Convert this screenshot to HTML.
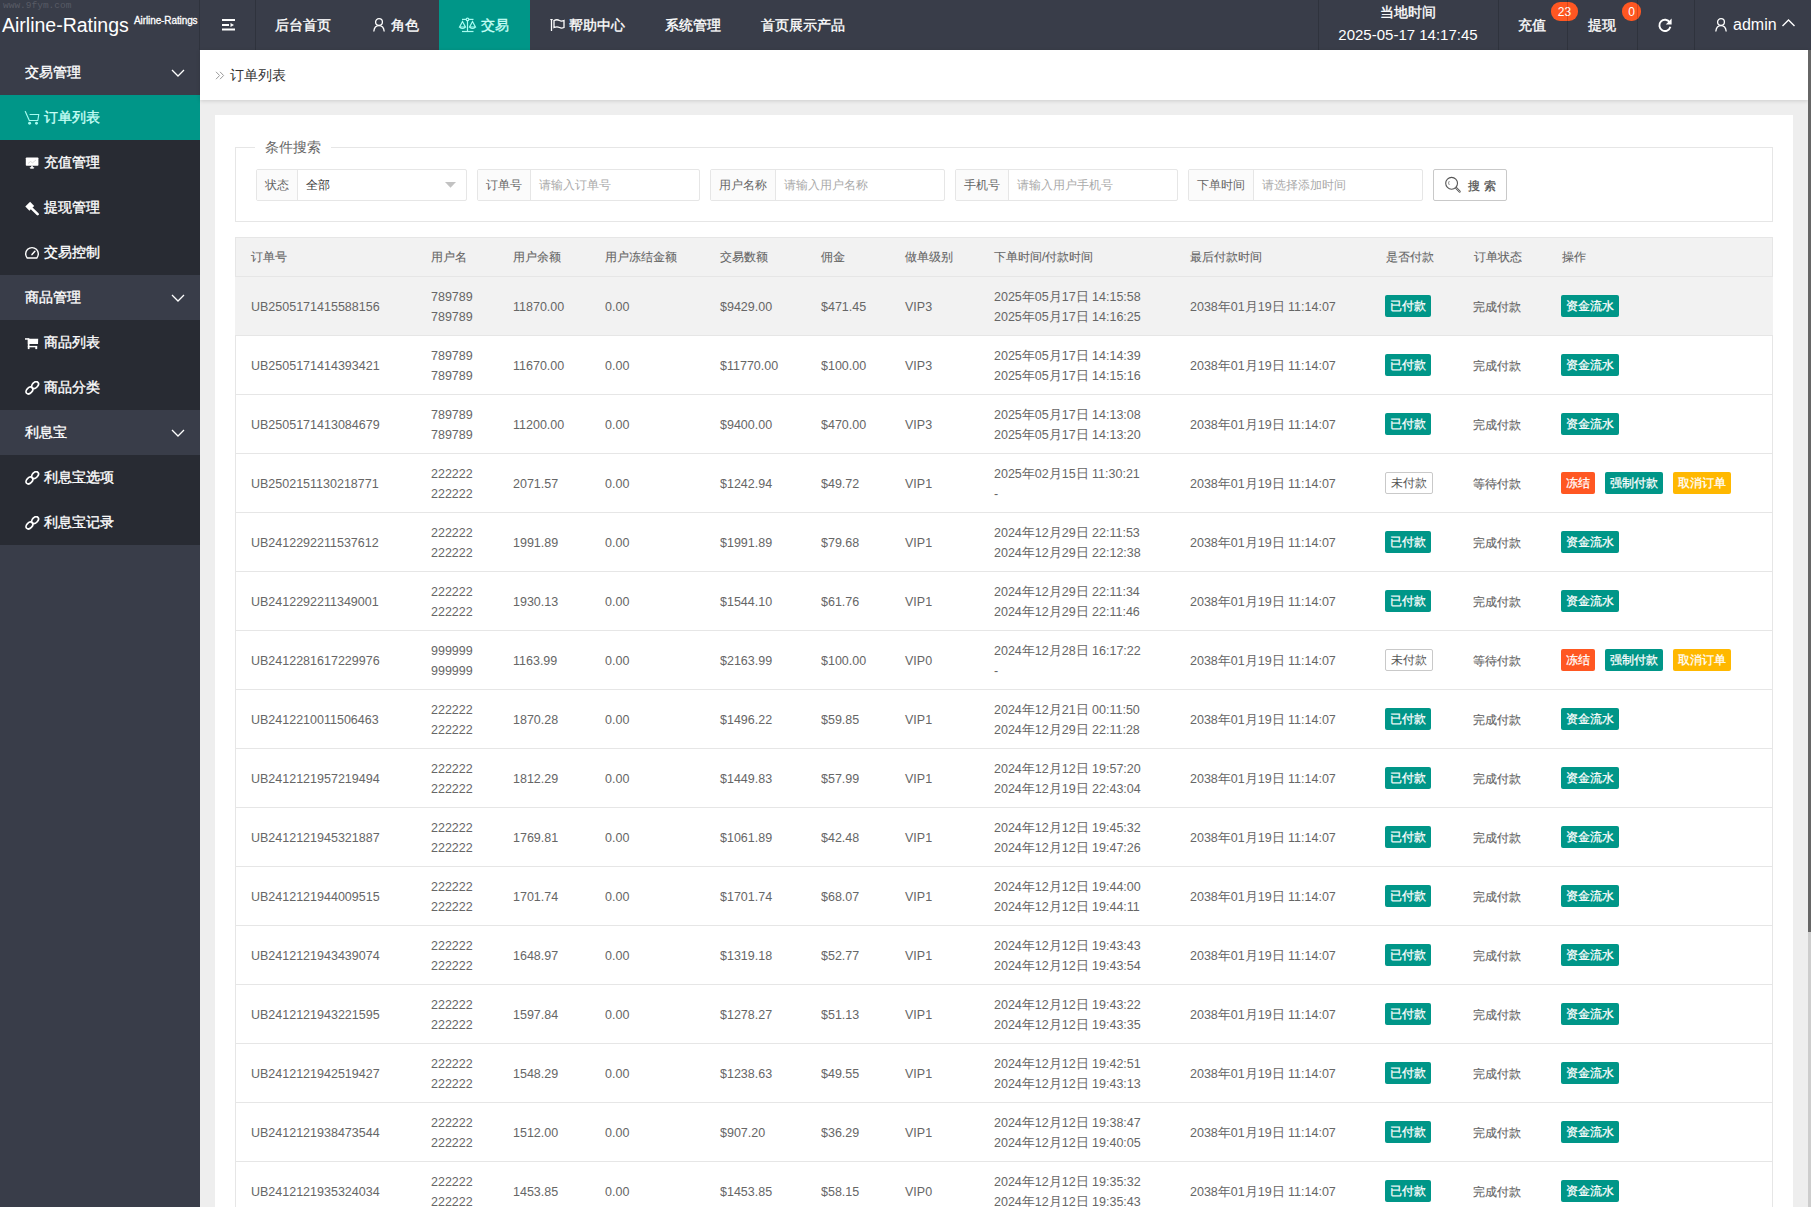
<!DOCTYPE html>
<html><head><meta charset="utf-8"><title>订单列表</title>
<style>
*{margin:0;padding:0;box-sizing:border-box}
html,body{width:1811px;height:1207px;overflow:hidden;background:#eeeeee;font-family:"Liberation Sans",sans-serif;color:#666}
.abs{position:absolute}
/* header */
.hdr{position:absolute;left:0;top:0;width:1811px;height:50px;background:#393D49;color:#fff}
.wm{position:absolute;left:3px;top:0px;font-family:"Liberation Mono",monospace;font-size:9.5px;color:#585b65;letter-spacing:0px}
.logo{position:absolute;left:2px;top:14px;font-size:19.5px;color:#fff;white-space:nowrap}
.logo2{position:absolute;left:134px;top:15px;font-size:10px;color:#fff;white-space:nowrap;letter-spacing:-0.1px}
.sep{position:absolute;top:0;width:1px;height:50px;background:rgba(0,0,0,.16)}
.nav{position:absolute;top:0;height:50px;line-height:50px;font-size:14px;color:#fff;white-space:nowrap}
.nav.act{background:#009688;color:#e6fffc}
.nav svg{position:absolute}
.badge{position:absolute;height:18.5px;line-height:20px;border-radius:9px;background:#FF5722;color:#fff;font-size:12px;text-align:center}
/* side */
.side{position:absolute;left:0;top:50px;width:200px;height:1157px;background:#393D49}
.grp{position:absolute;left:0;width:200px;height:45px;line-height:45px;font-size:14px;color:#fff;padding-left:25px}
.kids{position:absolute;left:0;width:200px;background:#282B33}
.item{position:absolute;left:0;width:200px;height:45px;line-height:45px;font-size:14px;color:#fff;padding-left:44px}
.item.act{background:#009688;color:#e6fffc}
.item svg,.grp svg{position:absolute}
/* body */
.crumb{position:absolute;left:200px;top:50px;width:1608px;height:50px;background:#fff;box-shadow:0 1px 4px rgba(0,0,0,.14)}
.crumb .t{position:absolute;left:30px;top:0;line-height:50px;font-size:14px;color:#333}
.crumb .r{position:absolute;left:15px;top:0;line-height:49px;font-size:14px;color:#999}
.card{position:absolute;left:215px;top:115px;width:1578px;height:1200px;background:#fff}
.fs{position:absolute;left:235px;top:147px;width:1538px;height:75px;border:1px solid #e6e6e6}
.legend{position:absolute;left:255px;top:137px;padding:0 10px;background:#fff;font-size:14px;line-height:20px;color:#666}
.ig{position:absolute;top:169px;height:32px;border:1px solid #e6e6e6;border-radius:2px;background:#fff}
.ig .lb{position:absolute;left:0;top:0;height:30px;line-height:30px;background:#fbfbfb;border-right:1px solid #e6e6e6;font-size:12px;color:#666;text-align:center}
.ig .ph{position:absolute;top:0;height:30px;line-height:30px;font-size:12px;color:#aaa;white-space:nowrap}
.sbtn{position:absolute;left:1433px;top:169px;width:74px;height:32px;border:1px solid #c9c9c9;border-radius:2px;background:#fff;font-size:12.5px;line-height:30px;color:#555}
/* table */
.tbl{position:absolute;left:235px;top:237px;width:1538px;height:1000px;border:1px solid #e6e6e6;border-bottom:none;background:#fff}
.thead{position:absolute;left:-1px;top:-1px;width:1538px;height:40px;background:#f2f2f2;border:1px solid #e6e6e6}
.tr{position:absolute;left:-1px;width:1538px;height:60px;border-top:1px solid #e6e6e6;border-bottom:1px solid #e6e6e6}
.tr.hov{background:#f2f2f2}
.td{position:absolute;top:0;height:100%;padding-left:16px;padding-top:2px;display:flex;align-items:center;font-size:12.5px;color:#666;white-space:nowrap}
.thead .td{color:#666;font-size:12px;padding-top:1px;padding-left:15px}
.l2{line-height:20px}
.btn{display:inline-block;height:22px;line-height:22px;padding:0 5px;font-size:12px;color:#fff;border-radius:2px;white-space:nowrap}
.tb{background:#009688}
.rb{background:#FF5722}
.yb{background:#FFB800}
.ml{margin-left:10px}
.unpaid{display:inline-block;height:22px;line-height:20px;padding:0 5px;font-size:12px;color:#555;border:1px solid #c9c9c9;border-radius:2px;background:#fff}
.sb{position:absolute;left:1808px;top:50px;width:3px;height:1157px;background:#cdcdcd}
.sb i{position:absolute;left:0;top:0;width:3px;height:882px;background:#666}
.nav,.grp,.item,.cnw{-webkit-text-stroke:0.35px currentColor}
.lat{-webkit-text-stroke:0}
.wm,.logo{-webkit-text-stroke:0}
.logo2{-webkit-text-stroke:0.3px #fff}
.cn{font-size:12px}
.td .btn,.td .unpaid{position:relative;top:-1px}
.btn{-webkit-text-stroke:0.25px currentColor}
.td > .btn:first-child,.td > .unpaid,.td > .cn{margin-left:-1px}
.sbtn span{-webkit-text-stroke:0.25px #555}
.thead{-webkit-text-stroke:0.1px currentColor}
.cn{-webkit-text-stroke:0.15px currentColor}

</style></head>
<body>
<div class="hdr">
  <div class="wm">www.9fym.com</div>
  <div class="logo">Airline-Ratings</div>
  <div class="logo2">Airline-Ratings</div>
  <div class="sep" style="left:199px"></div>
  <div class="sep" style="left:255px"></div>
  <svg class="abs" style="left:222px;top:19px" width="13" height="12" viewBox="0 0 13 12"><rect x="0" y="0" width="13" height="2" fill="#fff"/><rect x="0" y="5" width="7" height="2" fill="#fff"/><polygon points="8.5,4 12,6 8.5,8" fill="#fff"/><rect x="0" y="9.5" width="13" height="2" fill="#fff"/></svg>
  <div class="nav" style="left:275px">后台首页</div>
  <svg class="abs" style="left:372px;top:17px" width="14" height="16" viewBox="0 0 14 16"><circle cx="7" cy="5" r="3.4" fill="none" stroke="#fff" stroke-width="1.3"/><path d="M1.8 14.5 C2.2 10.5 4.5 8.7 7 8.7 C9.5 8.7 11.8 10.5 12.2 14.5" fill="none" stroke="#fff" stroke-width="1.3"/></svg>
  <div class="nav" style="left:391px">角色</div>
  <div class="nav act" style="left:439px;width:91px"></div>
  <svg class="abs" style="left:458px;top:17px" width="20" height="16" viewBox="0 0 20 16"><g fill="none" stroke="#a6fbf0" stroke-width="1.2"><path d="M4 2.4 H15.5"/><circle cx="9.5" cy="2.4" r="1.3" fill="#009688"/><path d="M9.5 3.7 V14.5"/><path d="M4 14.5 H15.5"/><path d="M4.5 4.5 L1.6 10 H7.4 Z"/><path d="M1.6 10 Q4.5 13 7.4 10"/><path d="M14.5 4.5 L11.6 10 H17.4 Z"/><path d="M11.6 10 Q14.5 13 17.4 10"/></g></svg>
  <div class="nav" style="left:481px;color:#c8fff6">交易</div>
  <svg class="abs" style="left:549px;top:18px" width="17" height="14" viewBox="0 0 17 14"><g fill="none" stroke="#fff" stroke-width="1.3"><path d="M2.5 1 V13"/><path d="M5 2.5 Q8 1 10.5 2.5 Q12.5 3.6 15 2.5 V9.5 Q12.5 10.6 10.5 9.5 Q8 8.2 5 9.5 Z"/></g><path d="M1 1 L4 1 L2.5 3 Z" fill="#fff"/></svg>
  <div class="nav" style="left:569px">帮助中心</div>
  <div class="nav" style="left:665px">系统管理</div>
  <div class="nav" style="left:761px">首页展示产品</div>

  <div class="sep" style="left:1318px"></div>
  <div class="abs cnw" style="left:1318px;top:3px;width:180px;text-align:center;font-size:14px;line-height:18px;color:#fff">当地时间</div>
  <div class="abs" style="left:1318px;top:26px;width:180px;text-align:center;font-size:15px;line-height:18px;color:#fff">2025-05-17 14:17:45</div>
  <div class="sep" style="left:1498px"></div>
  <div class="nav" style="left:1518px">充值</div>
  <div class="badge" style="left:1551px;top:2px;width:27px">23</div>
  <div class="sep" style="left:1567px;z-index:2"></div>
  <div class="nav" style="left:1588px">提现</div>
  <div class="badge" style="left:1622px;top:2px;width:19px">0</div>
  <div class="sep" style="left:1637px;z-index:2"></div>
  <svg class="abs" style="left:1657px;top:17px" width="16" height="16" viewBox="0 0 16 16"><path d="M12.8 5.5 A5.6 5.6 0 1 0 13.4 9.8" fill="none" stroke="#fff" stroke-width="1.9"/><polygon points="14.6,1.6 14.6,7.4 8.8,7.4" fill="#fff"/></svg>
  <div class="sep" style="left:1694px"></div>
  <svg class="abs" style="left:1714px;top:17px" width="14" height="16" viewBox="0 0 14 16"><circle cx="7" cy="5" r="3.4" fill="none" stroke="#fff" stroke-width="1.3"/><path d="M1.8 14.5 C2.2 10.5 4.5 8.7 7 8.7 C9.5 8.7 11.8 10.5 12.2 14.5" fill="none" stroke="#fff" stroke-width="1.3"/></svg>
  <div class="nav lat" style="left:1733px;font-size:16px">admin</div>
  <svg class="abs" style="left:1781px;top:18px" width="15" height="10" viewBox="0 0 15 10"><path d="M1.5 8 L7.5 2 L13.5 8" fill="none" stroke="#fff" stroke-width="1.4"/></svg>
</div>

<div class="side">
  <div class="grp" style="top:0">交易管理<svg style="left:171px;top:19px" width="14" height="8" viewBox="0 0 14 8"><path d="M1 1 L7 7 L13 1" fill="none" stroke="#fff" stroke-width="1.3"/></svg></div>
  <div class="kids" style="top:45px;height:180px">
    <div class="item act" style="top:0">
      <svg style="left:24px;top:16px" width="16" height="14" viewBox="0 0 16 14"><path d="M1.3 0.6 L5.3 9.5 H13.8 L14.8 3.5 H6" fill="none" stroke="#a6fbf0" stroke-width="1.15" stroke-linejoin="round" stroke-linecap="round"/><circle cx="5.6" cy="12.2" r="1.45" fill="#a6fbf0"/><circle cx="12.5" cy="12.2" r="1.45" fill="#a6fbf0"/></svg>
      <span style="color:#c8fff6">订单列表</span></div>
    <div class="item" style="top:45px">
      <svg style="left:25px;top:17px" width="14" height="12" viewBox="0 0 14 12"><rect x="0.8" y="0.5" width="12.6" height="8.3" rx="0.8" fill="#fff"/><path d="M3 6.5 L5.5 4.5 L7.5 5.8 L11 3" stroke="#c8c8c8" stroke-width="0.7" fill="none"/><rect x="6.2" y="8.8" width="1.6" height="1.6" fill="#fff"/><ellipse cx="7" cy="10.8" rx="2.4" ry="0.9" fill="#fff"/></svg>
      充值管理</div>
    <div class="item" style="top:90px">
      <svg style="left:25px;top:16px" width="14" height="15" viewBox="0 0 14 15"><polygon points="0.3,5.6 5.1,0.8 9.2,4.9 4.4,9.7" fill="#fff"/><path d="M7.2 7.8 L12.6 13.2" stroke="#fff" stroke-width="2.6" stroke-linecap="round"/></svg>
      提现管理</div>
    <div class="item" style="top:135px">
      <svg style="left:25px;top:16px" width="14" height="13" viewBox="0 0 14 13"><path d="M2.2 12 A6.3 6.3 0 1 1 11.8 12 Z" fill="none" stroke="#fff" stroke-width="1.4" stroke-linejoin="round"/><path d="M7 8.6 L9.9 5.3" stroke="#fff" stroke-width="1.5" stroke-linecap="round"/></svg>
      交易控制</div>
  </div>
  <div class="grp" style="top:225px">商品管理<svg style="left:171px;top:19px" width="14" height="8" viewBox="0 0 14 8"><path d="M1 1 L7 7 L13 1" fill="none" stroke="#fff" stroke-width="1.3"/></svg></div>
  <div class="kids" style="top:270px;height:90px">
    <div class="item" style="top:0">
      <svg style="left:25px;top:18px" width="14" height="12" viewBox="0 0 14 12"><g fill="#fff"><rect x="0" y="0.2" width="3.8" height="1.5"/><rect x="2.8" y="0.5" width="1.7" height="10.6"/><polygon points="2.8,0.8 13.2,0.8 13.0,5.9 2.8,5.9"/><rect x="2.8" y="7.9" width="9.4" height="1.4"/><rect x="10.3" y="8.5" width="1.9" height="2.6"/></g></svg>
      商品列表</div>
    <div class="item" style="top:45px">
      <svg style="left:25px;top:16px" width="15" height="15" viewBox="0 0 15 15"><g fill="none" stroke="#fff" stroke-width="1.7"><ellipse cx="4.4" cy="9.5" rx="3.9" ry="2.7" transform="rotate(-45 4.4 9.5)"/><ellipse cx="10.1" cy="4.1" rx="3.9" ry="2.7" transform="rotate(-45 10.1 4.1)"/></g></svg>
      商品分类</div>
  </div>
  <div class="grp" style="top:360px">利息宝<svg style="left:171px;top:19px" width="14" height="8" viewBox="0 0 14 8"><path d="M1 1 L7 7 L13 1" fill="none" stroke="#fff" stroke-width="1.3"/></svg></div>
  <div class="kids" style="top:405px;height:90px">
    <div class="item" style="top:0">
      <svg style="left:25px;top:16px" width="15" height="15" viewBox="0 0 15 15"><g fill="none" stroke="#fff" stroke-width="1.7"><ellipse cx="4.4" cy="9.5" rx="3.9" ry="2.7" transform="rotate(-45 4.4 9.5)"/><ellipse cx="10.1" cy="4.1" rx="3.9" ry="2.7" transform="rotate(-45 10.1 4.1)"/></g></svg>
      利息宝选项</div>
    <div class="item" style="top:45px">
      <svg style="left:25px;top:16px" width="15" height="15" viewBox="0 0 15 15"><g fill="none" stroke="#fff" stroke-width="1.7"><ellipse cx="4.4" cy="9.5" rx="3.9" ry="2.7" transform="rotate(-45 4.4 9.5)"/><ellipse cx="10.1" cy="4.1" rx="3.9" ry="2.7" transform="rotate(-45 10.1 4.1)"/></g></svg>
      利息宝记录</div>
  </div>
</div>

<div class="crumb"><svg class="abs" style="left:15px;top:21px" width="10" height="9" viewBox="0 0 10 9"><path d="M1 0.8 L4.6 4.5 L1 8.2 M5 0.8 L8.6 4.5 L5 8.2" fill="none" stroke="#999" stroke-width="1"/></svg><span class="t">订单列表</span></div>
<div class="card"></div>
<div class="fs"></div>
<div class="legend">条件搜索</div>

<div class="ig" style="left:256px;width:211px"><div class="lb" style="width:41px">状态</div><div class="ph" style="left:49px;color:#333">全部</div><svg class="abs" style="left:188px;top:12px" width="11" height="7" viewBox="0 0 11 7"><polygon points="0,0 11,0 5.5,5.8" fill="#c2c2c2"/></svg></div>
<div class="ig" style="left:477px;width:223px"><div class="lb" style="width:53px">订单号</div><div class="ph" style="left:61px">请输入订单号</div></div>
<div class="ig" style="left:710px;width:235px"><div class="lb" style="width:65px">用户名称</div><div class="ph" style="left:73px">请输入用户名称</div></div>
<div class="ig" style="left:955px;width:223px"><div class="lb" style="width:53px">手机号</div><div class="ph" style="left:61px">请输入用户手机号</div></div>
<div class="ig" style="left:1188px;width:235px"><div class="lb" style="width:65px">下单时间</div><div class="ph" style="left:73px">请选择添加时间</div></div>
<div class="sbtn"><svg class="abs" style="left:10px;top:6px" width="18" height="18" viewBox="0 0 18 18"><circle cx="7.6" cy="7.3" r="5.9" fill="none" stroke="#555" stroke-width="1.1"/><path d="M12.2 12 L15.6 15.6" stroke="#555" stroke-width="2.2" stroke-linecap="round"/><path d="M12.2 12 L15.6 15.6" stroke="#fff" stroke-width="0.6" stroke-linecap="round"/><path d="M5.3 5 A3.2 3.2 0 0 0 5.3 9" fill="none" stroke="#777" stroke-width="0.8"/></svg><span class="abs" style="left:34px;top:1px;letter-spacing:4px;font-size:12px">搜索</span></div>

<div class="tbl"><div class="thead"><div class="td" style="left:0px;width:180px">订单号</div><div class="td" style="left:180px;width:82px">用户名</div><div class="td" style="left:262px;width:92px">用户余额</div><div class="td" style="left:354px;width:115px">用户冻结金额</div><div class="td" style="left:469px;width:101px">交易数额</div><div class="td" style="left:570px;width:84px">佣金</div><div class="td" style="left:654px;width:89px">做单级别</div><div class="td" style="left:743px;width:196px">下单时间/付款时间</div><div class="td" style="left:939px;width:196px">最后付款时间</div><div class="td" style="left:1135px;width:88px">是否付款</div><div class="td" style="left:1223px;width:88px">订单状态</div><div class="td" style="left:1311px;width:226px">操作</div></div><div class="tr hov" style="top:38px"><div class="td" style="left:0px;width:180px">UB2505171415588156</div><div class="td" style="left:180px;width:82px"><div class="l2">789789<br>789789</div></div><div class="td" style="left:262px;width:92px">11870.00</div><div class="td" style="left:354px;width:115px">0.00</div><div class="td" style="left:469px;width:101px">$9429.00</div><div class="td" style="left:570px;width:84px">$471.45</div><div class="td" style="left:654px;width:89px">VIP3</div><div class="td" style="left:743px;width:196px"><div class="l2">2025年05月17日 14:15:58<br>2025年05月17日 14:16:25</div></div><div class="td" style="left:939px;width:196px">2038年01月19日 11:14:07</div><div class="td" style="left:1135px;width:88px"><span class="btn tb pb">已付款</span></div><div class="td" style="left:1223px;width:88px"><span class="cn">完成付款</span></div><div class="td" style="left:1311px;width:226px"><span class="btn tb">资金流水</span></div></div><div class="tr" style="top:97px"><div class="td" style="left:0px;width:180px">UB2505171414393421</div><div class="td" style="left:180px;width:82px"><div class="l2">789789<br>789789</div></div><div class="td" style="left:262px;width:92px">11670.00</div><div class="td" style="left:354px;width:115px">0.00</div><div class="td" style="left:469px;width:101px">$11770.00</div><div class="td" style="left:570px;width:84px">$100.00</div><div class="td" style="left:654px;width:89px">VIP3</div><div class="td" style="left:743px;width:196px"><div class="l2">2025年05月17日 14:14:39<br>2025年05月17日 14:15:16</div></div><div class="td" style="left:939px;width:196px">2038年01月19日 11:14:07</div><div class="td" style="left:1135px;width:88px"><span class="btn tb pb">已付款</span></div><div class="td" style="left:1223px;width:88px"><span class="cn">完成付款</span></div><div class="td" style="left:1311px;width:226px"><span class="btn tb">资金流水</span></div></div><div class="tr" style="top:156px"><div class="td" style="left:0px;width:180px">UB2505171413084679</div><div class="td" style="left:180px;width:82px"><div class="l2">789789<br>789789</div></div><div class="td" style="left:262px;width:92px">11200.00</div><div class="td" style="left:354px;width:115px">0.00</div><div class="td" style="left:469px;width:101px">$9400.00</div><div class="td" style="left:570px;width:84px">$470.00</div><div class="td" style="left:654px;width:89px">VIP3</div><div class="td" style="left:743px;width:196px"><div class="l2">2025年05月17日 14:13:08<br>2025年05月17日 14:13:20</div></div><div class="td" style="left:939px;width:196px">2038年01月19日 11:14:07</div><div class="td" style="left:1135px;width:88px"><span class="btn tb pb">已付款</span></div><div class="td" style="left:1223px;width:88px"><span class="cn">完成付款</span></div><div class="td" style="left:1311px;width:226px"><span class="btn tb">资金流水</span></div></div><div class="tr" style="top:215px"><div class="td" style="left:0px;width:180px">UB2502151130218771</div><div class="td" style="left:180px;width:82px"><div class="l2">222222<br>222222</div></div><div class="td" style="left:262px;width:92px">2071.57</div><div class="td" style="left:354px;width:115px">0.00</div><div class="td" style="left:469px;width:101px">$1242.94</div><div class="td" style="left:570px;width:84px">$49.72</div><div class="td" style="left:654px;width:89px">VIP1</div><div class="td" style="left:743px;width:196px"><div class="l2">2025年02月15日 11:30:21<br>-</div></div><div class="td" style="left:939px;width:196px">2038年01月19日 11:14:07</div><div class="td" style="left:1135px;width:88px"><span class="unpaid">未付款</span></div><div class="td" style="left:1223px;width:88px"><span class="cn">等待付款</span></div><div class="td" style="left:1311px;width:226px"><span class="btn rb">冻结</span><span class="btn tb ml">强制付款</span><span class="btn yb ml">取消订单</span></div></div><div class="tr" style="top:274px"><div class="td" style="left:0px;width:180px">UB2412292211537612</div><div class="td" style="left:180px;width:82px"><div class="l2">222222<br>222222</div></div><div class="td" style="left:262px;width:92px">1991.89</div><div class="td" style="left:354px;width:115px">0.00</div><div class="td" style="left:469px;width:101px">$1991.89</div><div class="td" style="left:570px;width:84px">$79.68</div><div class="td" style="left:654px;width:89px">VIP1</div><div class="td" style="left:743px;width:196px"><div class="l2">2024年12月29日 22:11:53<br>2024年12月29日 22:12:38</div></div><div class="td" style="left:939px;width:196px">2038年01月19日 11:14:07</div><div class="td" style="left:1135px;width:88px"><span class="btn tb pb">已付款</span></div><div class="td" style="left:1223px;width:88px"><span class="cn">完成付款</span></div><div class="td" style="left:1311px;width:226px"><span class="btn tb">资金流水</span></div></div><div class="tr" style="top:333px"><div class="td" style="left:0px;width:180px">UB2412292211349001</div><div class="td" style="left:180px;width:82px"><div class="l2">222222<br>222222</div></div><div class="td" style="left:262px;width:92px">1930.13</div><div class="td" style="left:354px;width:115px">0.00</div><div class="td" style="left:469px;width:101px">$1544.10</div><div class="td" style="left:570px;width:84px">$61.76</div><div class="td" style="left:654px;width:89px">VIP1</div><div class="td" style="left:743px;width:196px"><div class="l2">2024年12月29日 22:11:34<br>2024年12月29日 22:11:46</div></div><div class="td" style="left:939px;width:196px">2038年01月19日 11:14:07</div><div class="td" style="left:1135px;width:88px"><span class="btn tb pb">已付款</span></div><div class="td" style="left:1223px;width:88px"><span class="cn">完成付款</span></div><div class="td" style="left:1311px;width:226px"><span class="btn tb">资金流水</span></div></div><div class="tr" style="top:392px"><div class="td" style="left:0px;width:180px">UB2412281617229976</div><div class="td" style="left:180px;width:82px"><div class="l2">999999<br>999999</div></div><div class="td" style="left:262px;width:92px">1163.99</div><div class="td" style="left:354px;width:115px">0.00</div><div class="td" style="left:469px;width:101px">$2163.99</div><div class="td" style="left:570px;width:84px">$100.00</div><div class="td" style="left:654px;width:89px">VIP0</div><div class="td" style="left:743px;width:196px"><div class="l2">2024年12月28日 16:17:22<br>-</div></div><div class="td" style="left:939px;width:196px">2038年01月19日 11:14:07</div><div class="td" style="left:1135px;width:88px"><span class="unpaid">未付款</span></div><div class="td" style="left:1223px;width:88px"><span class="cn">等待付款</span></div><div class="td" style="left:1311px;width:226px"><span class="btn rb">冻结</span><span class="btn tb ml">强制付款</span><span class="btn yb ml">取消订单</span></div></div><div class="tr" style="top:451px"><div class="td" style="left:0px;width:180px">UB2412210011506463</div><div class="td" style="left:180px;width:82px"><div class="l2">222222<br>222222</div></div><div class="td" style="left:262px;width:92px">1870.28</div><div class="td" style="left:354px;width:115px">0.00</div><div class="td" style="left:469px;width:101px">$1496.22</div><div class="td" style="left:570px;width:84px">$59.85</div><div class="td" style="left:654px;width:89px">VIP1</div><div class="td" style="left:743px;width:196px"><div class="l2">2024年12月21日 00:11:50<br>2024年12月29日 22:11:28</div></div><div class="td" style="left:939px;width:196px">2038年01月19日 11:14:07</div><div class="td" style="left:1135px;width:88px"><span class="btn tb pb">已付款</span></div><div class="td" style="left:1223px;width:88px"><span class="cn">完成付款</span></div><div class="td" style="left:1311px;width:226px"><span class="btn tb">资金流水</span></div></div><div class="tr" style="top:510px"><div class="td" style="left:0px;width:180px">UB2412121957219494</div><div class="td" style="left:180px;width:82px"><div class="l2">222222<br>222222</div></div><div class="td" style="left:262px;width:92px">1812.29</div><div class="td" style="left:354px;width:115px">0.00</div><div class="td" style="left:469px;width:101px">$1449.83</div><div class="td" style="left:570px;width:84px">$57.99</div><div class="td" style="left:654px;width:89px">VIP1</div><div class="td" style="left:743px;width:196px"><div class="l2">2024年12月12日 19:57:20<br>2024年12月19日 22:43:04</div></div><div class="td" style="left:939px;width:196px">2038年01月19日 11:14:07</div><div class="td" style="left:1135px;width:88px"><span class="btn tb pb">已付款</span></div><div class="td" style="left:1223px;width:88px"><span class="cn">完成付款</span></div><div class="td" style="left:1311px;width:226px"><span class="btn tb">资金流水</span></div></div><div class="tr" style="top:569px"><div class="td" style="left:0px;width:180px">UB2412121945321887</div><div class="td" style="left:180px;width:82px"><div class="l2">222222<br>222222</div></div><div class="td" style="left:262px;width:92px">1769.81</div><div class="td" style="left:354px;width:115px">0.00</div><div class="td" style="left:469px;width:101px">$1061.89</div><div class="td" style="left:570px;width:84px">$42.48</div><div class="td" style="left:654px;width:89px">VIP1</div><div class="td" style="left:743px;width:196px"><div class="l2">2024年12月12日 19:45:32<br>2024年12月12日 19:47:26</div></div><div class="td" style="left:939px;width:196px">2038年01月19日 11:14:07</div><div class="td" style="left:1135px;width:88px"><span class="btn tb pb">已付款</span></div><div class="td" style="left:1223px;width:88px"><span class="cn">完成付款</span></div><div class="td" style="left:1311px;width:226px"><span class="btn tb">资金流水</span></div></div><div class="tr" style="top:628px"><div class="td" style="left:0px;width:180px">UB2412121944009515</div><div class="td" style="left:180px;width:82px"><div class="l2">222222<br>222222</div></div><div class="td" style="left:262px;width:92px">1701.74</div><div class="td" style="left:354px;width:115px">0.00</div><div class="td" style="left:469px;width:101px">$1701.74</div><div class="td" style="left:570px;width:84px">$68.07</div><div class="td" style="left:654px;width:89px">VIP1</div><div class="td" style="left:743px;width:196px"><div class="l2">2024年12月12日 19:44:00<br>2024年12月12日 19:44:11</div></div><div class="td" style="left:939px;width:196px">2038年01月19日 11:14:07</div><div class="td" style="left:1135px;width:88px"><span class="btn tb pb">已付款</span></div><div class="td" style="left:1223px;width:88px"><span class="cn">完成付款</span></div><div class="td" style="left:1311px;width:226px"><span class="btn tb">资金流水</span></div></div><div class="tr" style="top:687px"><div class="td" style="left:0px;width:180px">UB2412121943439074</div><div class="td" style="left:180px;width:82px"><div class="l2">222222<br>222222</div></div><div class="td" style="left:262px;width:92px">1648.97</div><div class="td" style="left:354px;width:115px">0.00</div><div class="td" style="left:469px;width:101px">$1319.18</div><div class="td" style="left:570px;width:84px">$52.77</div><div class="td" style="left:654px;width:89px">VIP1</div><div class="td" style="left:743px;width:196px"><div class="l2">2024年12月12日 19:43:43<br>2024年12月12日 19:43:54</div></div><div class="td" style="left:939px;width:196px">2038年01月19日 11:14:07</div><div class="td" style="left:1135px;width:88px"><span class="btn tb pb">已付款</span></div><div class="td" style="left:1223px;width:88px"><span class="cn">完成付款</span></div><div class="td" style="left:1311px;width:226px"><span class="btn tb">资金流水</span></div></div><div class="tr" style="top:746px"><div class="td" style="left:0px;width:180px">UB2412121943221595</div><div class="td" style="left:180px;width:82px"><div class="l2">222222<br>222222</div></div><div class="td" style="left:262px;width:92px">1597.84</div><div class="td" style="left:354px;width:115px">0.00</div><div class="td" style="left:469px;width:101px">$1278.27</div><div class="td" style="left:570px;width:84px">$51.13</div><div class="td" style="left:654px;width:89px">VIP1</div><div class="td" style="left:743px;width:196px"><div class="l2">2024年12月12日 19:43:22<br>2024年12月12日 19:43:35</div></div><div class="td" style="left:939px;width:196px">2038年01月19日 11:14:07</div><div class="td" style="left:1135px;width:88px"><span class="btn tb pb">已付款</span></div><div class="td" style="left:1223px;width:88px"><span class="cn">完成付款</span></div><div class="td" style="left:1311px;width:226px"><span class="btn tb">资金流水</span></div></div><div class="tr" style="top:805px"><div class="td" style="left:0px;width:180px">UB2412121942519427</div><div class="td" style="left:180px;width:82px"><div class="l2">222222<br>222222</div></div><div class="td" style="left:262px;width:92px">1548.29</div><div class="td" style="left:354px;width:115px">0.00</div><div class="td" style="left:469px;width:101px">$1238.63</div><div class="td" style="left:570px;width:84px">$49.55</div><div class="td" style="left:654px;width:89px">VIP1</div><div class="td" style="left:743px;width:196px"><div class="l2">2024年12月12日 19:42:51<br>2024年12月12日 19:43:13</div></div><div class="td" style="left:939px;width:196px">2038年01月19日 11:14:07</div><div class="td" style="left:1135px;width:88px"><span class="btn tb pb">已付款</span></div><div class="td" style="left:1223px;width:88px"><span class="cn">完成付款</span></div><div class="td" style="left:1311px;width:226px"><span class="btn tb">资金流水</span></div></div><div class="tr" style="top:864px"><div class="td" style="left:0px;width:180px">UB2412121938473544</div><div class="td" style="left:180px;width:82px"><div class="l2">222222<br>222222</div></div><div class="td" style="left:262px;width:92px">1512.00</div><div class="td" style="left:354px;width:115px">0.00</div><div class="td" style="left:469px;width:101px">$907.20</div><div class="td" style="left:570px;width:84px">$36.29</div><div class="td" style="left:654px;width:89px">VIP1</div><div class="td" style="left:743px;width:196px"><div class="l2">2024年12月12日 19:38:47<br>2024年12月12日 19:40:05</div></div><div class="td" style="left:939px;width:196px">2038年01月19日 11:14:07</div><div class="td" style="left:1135px;width:88px"><span class="btn tb pb">已付款</span></div><div class="td" style="left:1223px;width:88px"><span class="cn">完成付款</span></div><div class="td" style="left:1311px;width:226px"><span class="btn tb">资金流水</span></div></div><div class="tr" style="top:923px"><div class="td" style="left:0px;width:180px">UB2412121935324034</div><div class="td" style="left:180px;width:82px"><div class="l2">222222<br>222222</div></div><div class="td" style="left:262px;width:92px">1453.85</div><div class="td" style="left:354px;width:115px">0.00</div><div class="td" style="left:469px;width:101px">$1453.85</div><div class="td" style="left:570px;width:84px">$58.15</div><div class="td" style="left:654px;width:89px">VIP0</div><div class="td" style="left:743px;width:196px"><div class="l2">2024年12月12日 19:35:32<br>2024年12月12日 19:35:43</div></div><div class="td" style="left:939px;width:196px">2038年01月19日 11:14:07</div><div class="td" style="left:1135px;width:88px"><span class="btn tb pb">已付款</span></div><div class="td" style="left:1223px;width:88px"><span class="cn">完成付款</span></div><div class="td" style="left:1311px;width:226px"><span class="btn tb">资金流水</span></div></div></div>

<div class="sb"><i></i></div>

</body></html>
